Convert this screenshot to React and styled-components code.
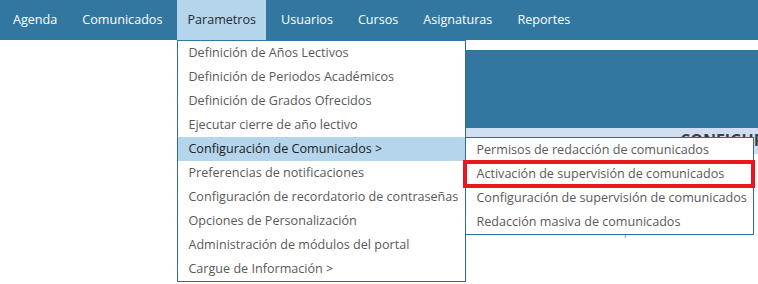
import React from "react";
import styled, { createGlobalStyle } from "styled-components";

const Global = createGlobalStyle`
  html, body { margin: 0; padding: 0; background: #fff; }
  body { font-family: "Open Sans", "Noto Sans", sans-serif; font-size: 12.6px; }
  * { box-sizing: border-box; }
`;

const Page = styled.div`
  width: 758px;
  height: 284px;
  position: relative;
  overflow: hidden;
`;

const NavBar = styled.nav`
  height: 40px;
  background: #3277a0;
  display: flex;
  align-items: stretch;
  gap: 5px;
  padding-left: 3px;
`;

const NavItem = styled.div`
  position: relative;
  padding: 0 10px;
  line-height: 40px;
  font-size: 12.6px;
  color: ${(p) => (p.$active ? "#2b2b2b" : "#ffffff")};
  background: ${(p) => (p.$active ? "#b4d5eb" : "transparent")};
  white-space: nowrap;
`;

const Dropdown = styled.ul`
  position: absolute;
  top: 40px;
  left: 0;
  width: 289px;
  margin: 0;
  padding: 0;
  list-style: none;
  background: #fff;
  border: 1px solid #2e6c92;
  border-top: 1px solid #3277a0;
  z-index: 5;
`;

const MenuItem = styled.li`
  position: relative;
  height: 24px;
  line-height: 24px;
  padding-left: 10px;
  font-size: 12.6px;
  color: ${(p) => (p.$active ? "#222" : "#5a5a5a")};
  background: ${(p) => (p.$active ? "#b4d5eb" : "transparent")};
  white-space: nowrap;
`;

const SubMenu = styled.ul`
  position: absolute;
  top: 0;
  left: 287px;
  width: 289px;
  margin: 0;
  padding: 0;
  list-style: none;
  background: #fff;
  border: 1px solid #2e6c92;
  z-index: 6;
`;

const SubItem = styled.li`
  position: relative;
  height: 24px;
  line-height: 24px;
  padding-left: 10px;
  font-size: 12.6px;
  color: #5a5a5a;
  white-space: nowrap;
`;

const Highlight = styled.span`
  position: absolute;
  left: -3px;
  right: -2px;
  top: -2px;
  bottom: -2px;
  border: 4px solid #e8161f;
  pointer-events: none;
`;

const Main = styled.main`
  padding-top: 10px;
  padding-left: 400px;
`;

const Panel = styled.section`
  display: flex;
  flex-direction: column;
`;

const PanelHeader = styled.div`
  height: 78px;
  background: #3277a0;
`;

const TitleBar = styled.div`
  height: 26px;
  background: #cfdef0;
  padding-left: 280px;
  padding-top: 1px;
  font-size: 16px;
  font-weight: 700;
  color: #3f3f3f;
  white-space: nowrap;
  line-height: 22px;
`;

const Note = styled.div`
  padding: 70px 0 0 103px;
  font-size: 10px;
  color: #8a8a8a;
  white-space: nowrap;
`;

const navItems = ["Agenda", "Comunicados", "Parametros", "Usuarios", "Cursos", "Asignaturas", "Reportes"];

const paramItems = [
  "Definición de Años Lectivos",
  "Definición de Periodos Académicos",
  "Definición de Grados Ofrecidos",
  "Ejecutar cierre de año lectivo",
  "Configuración de Comunicados >",
  "Preferencias de notificaciones",
  "Configuración de recordatorio de contraseñas",
  "Opciones de Personalización",
  "Administración de módulos del portal",
  "Cargue de Información >",
];

const subItems = [
  "Permisos de redacción de comunicados",
  "Activación de supervisión de comunicados",
  "Configuración de supervisión de comunicados",
  "Redacción masiva de comunicados",
];

export default function App() {
  return (
    <Page>
      <Global />
      <NavBar>
        {navItems.map((n) => (
          <NavItem key={n} $active={n === "Parametros"}>
            {n}
            {n === "Parametros" && (
              <Dropdown>
                {paramItems.map((p, i) => (
                  <MenuItem key={p} $active={i === 4}>
                    {p}
                    {i === 4 && (
                      <SubMenu>
                        {subItems.map((s, j) => (
                          <SubItem key={s}>
                            {s}
                            {j === 1 && <Highlight />}
                          </SubItem>
                        ))}
                      </SubMenu>
                    )}
                  </MenuItem>
                ))}
              </Dropdown>
            )}
          </NavItem>
        ))}
      </NavBar>
      <Main>
        <Panel>
          <PanelHeader />
          <TitleBar>CONFIGURACIÓN DE COMUNICADOS</TitleBar>
          <Note>Seleccione los usuarios supervisores</Note>
        </Panel>
      </Main>
    </Page>
  );
}
